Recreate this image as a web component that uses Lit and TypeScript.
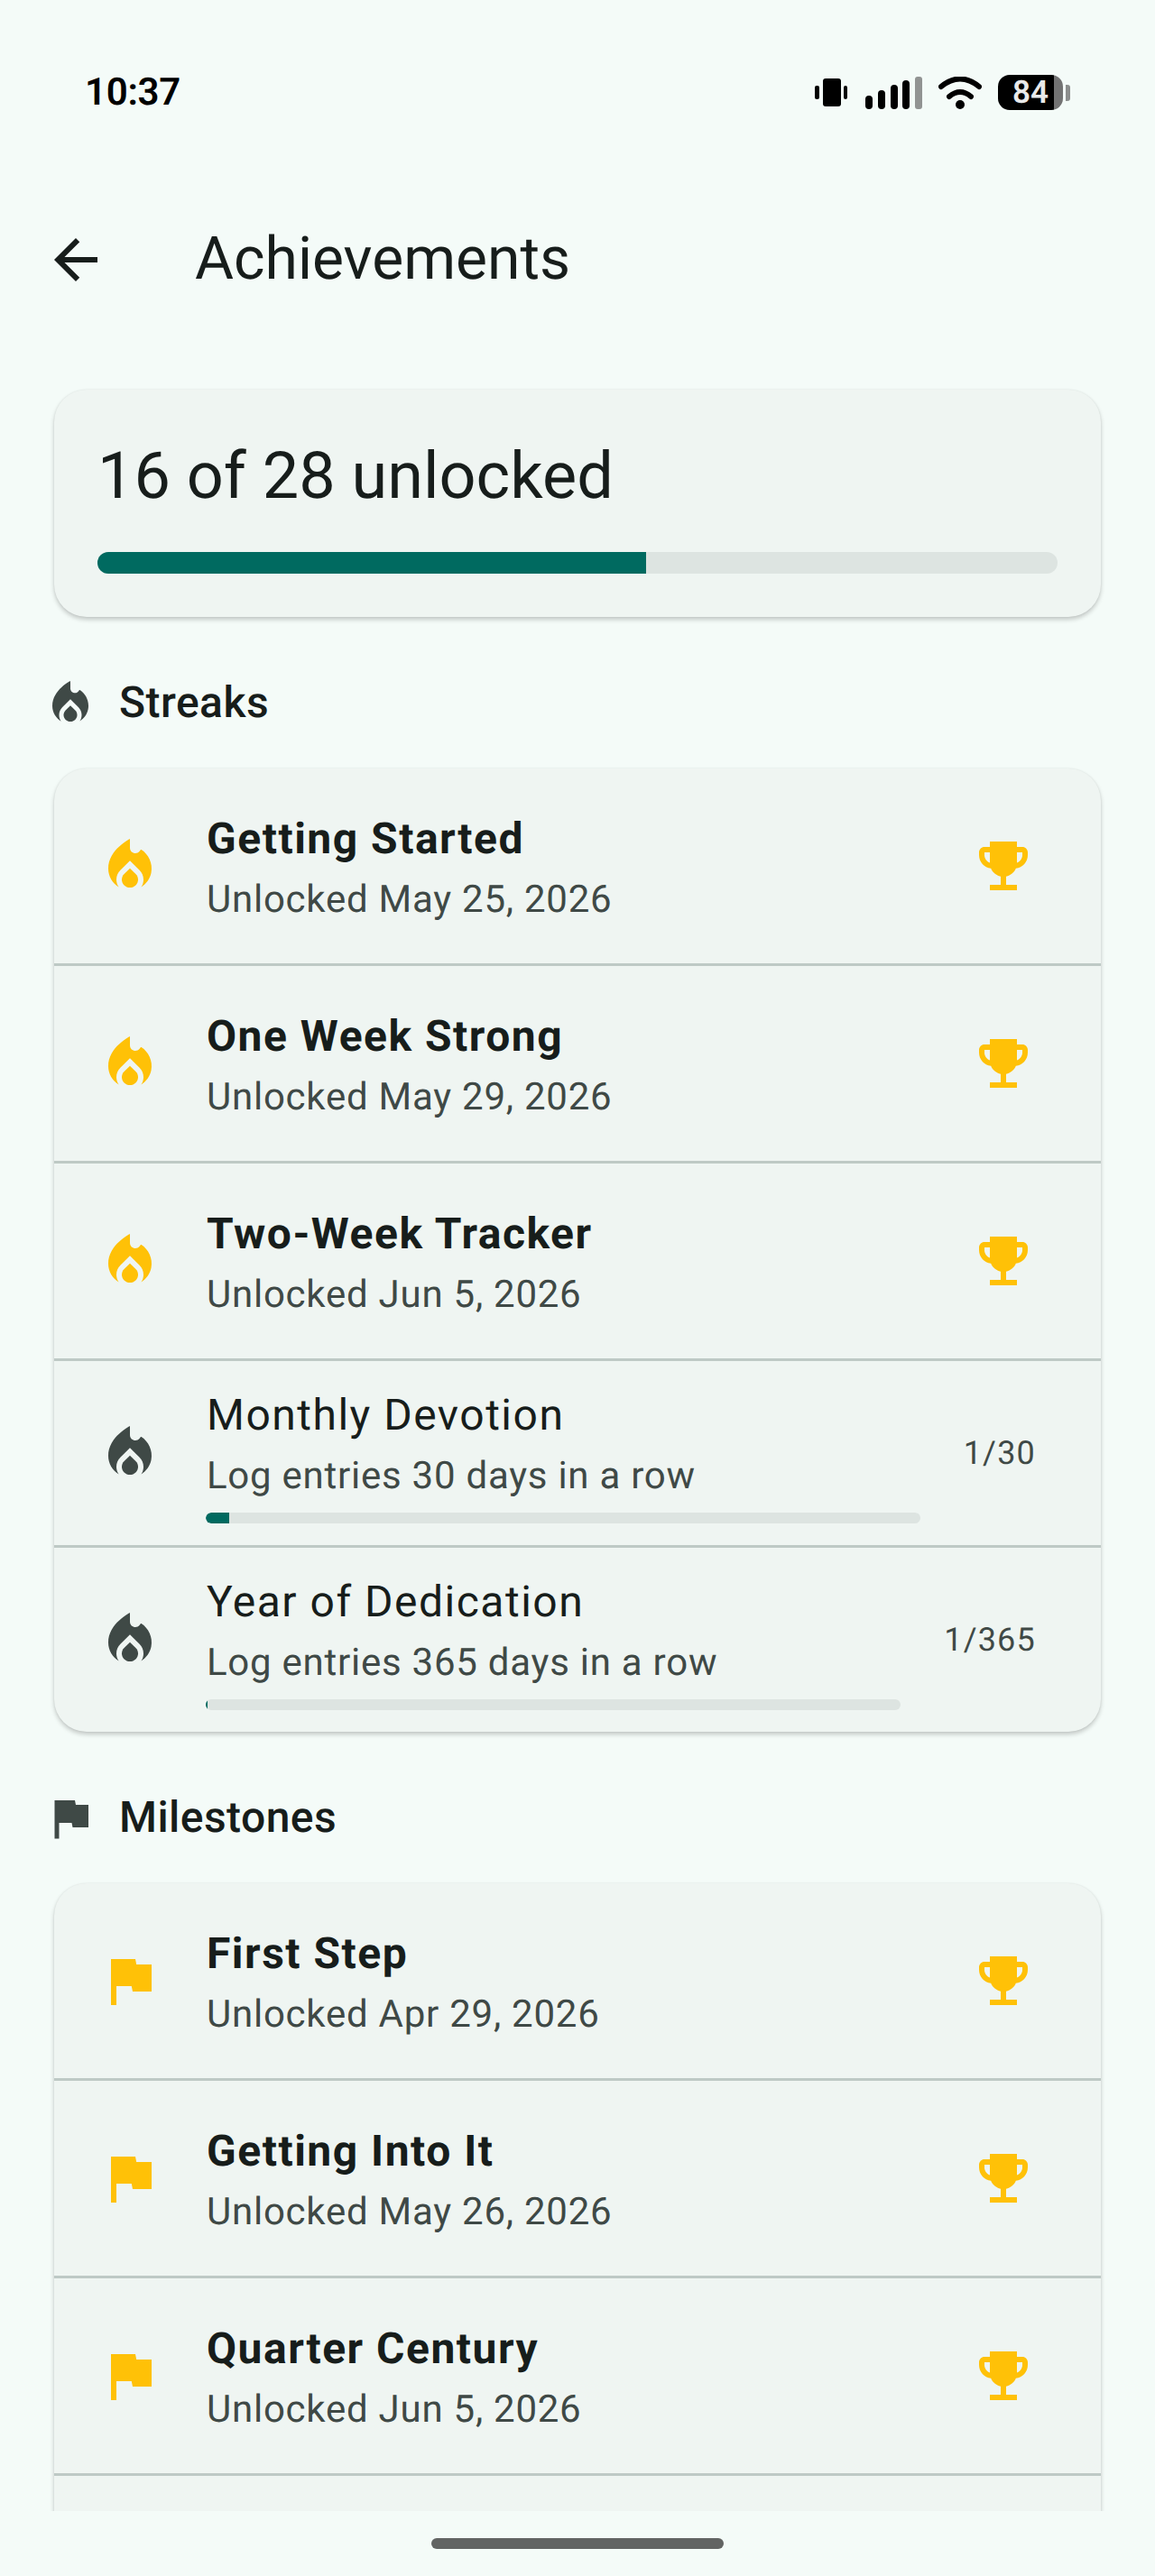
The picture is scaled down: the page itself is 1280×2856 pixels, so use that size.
import { LitElement, css, html, svg, nothing } from "lit";
import { customElement } from "lit/decorators.js";

const FLAME = svg`<path d="M12 12.9l-2.13 2.09C9.31 15.55 9 16.28 9 17.06 9 18.68 10.35 20 12 20s3-1.32 3-2.94c0-.78-.31-1.52-.87-2.07L12 12.9z"/><path d="M16 6l-.44.55C14.38 8.02 12 7.19 12 5.3V2S4 6 4 13c0 2.92 1.56 5.47 3.89 6.86-.56-.79-.89-1.76-.89-2.8 0-1.32.52-2.56 1.47-3.5L12 10.1l3.53 3.47c.95.93 1.47 2.17 1.47 3.5 0 1.02-.31 1.96-.85 2.75 1.89-1.15 3.29-3.06 3.71-5.3.66-3.52-1.03-6.83-3.66-8.52z"/>`;
const FLAG = svg`<path d="M14.4 6L14 4H5v17h2v-7h5.6l.4 2h7V6z"/>`;
const TROPHY = svg`<path d="M19 5h-2V3H7v2H5c-1.1 0-2 .9-2 2v1c0 2.55 1.92 4.63 4.39 4.94.63 1.5 1.98 2.63 3.61 2.96V19H7v2h10v-2h-4v-3.1c1.63-.33 2.98-1.46 3.61-2.96C19.08 12.63 21 10.55 21 8V7c0-1.1-.9-2-2-2zM5 8V7h2v3.82C5.84 10.4 5 9.3 5 8zm14 0c0 1.3-.84 2.4-2 2.82V7h2v1z"/>`;

type Item = {
  title: string;
  sub?: string;
  done?: boolean;
  value?: number;
  goal?: number;
};

type Section = { name: string; icon: unknown; items: Item[] };

const SECTIONS: Section[] = [
  {
    name: "Streaks",
    icon: FLAME,
    items: [
      { title: "Getting Started", sub: "Unlocked May 25, 2026", done: true },
      { title: "One Week Strong", sub: "Unlocked May 29, 2026", done: true },
      { title: "Two-Week Tracker", sub: "Unlocked Jun 5, 2026", done: true },
      { title: "Monthly Devotion", sub: "Log entries 30 days in a row", value: 1, goal: 30 },
      { title: "Year of Dedication", sub: "Log entries 365 days in a row", value: 1, goal: 365 },
    ],
  },
  {
    name: "Milestones",
    icon: FLAG,
    items: [
      { title: "First Step", sub: "Unlocked Apr 29, 2026", done: true },
      { title: "Getting Into It", sub: "Unlocked May 26, 2026", done: true },
      { title: "Quarter Century", sub: "Unlocked Jun 5, 2026", done: true },
      // only the tops of this row's letters are on screen
      { title: "Halfway to a Hundred" },
    ],
  },
];

@customElement("app-root")
export class AppRoot extends LitElement {
  static styles = css`
    :host {
      display: flex;
      flex-direction: column;
      width: 1280px;
      height: 2856px;
      overflow: hidden;
      background: #f4fbf8;
      color: #171d1b;
      font-family: Roboto, "Noto Sans", sans-serif;
      text-rendering: geometricPrecision;
    }

    .status {
      flex: none;
      height: 192px;
      box-sizing: border-box;
      padding: 75px 94px 0;
    }

    .status-row {
      display: flex;
      align-items: center;
      justify-content: space-between;
      height: 55px;
    }

    .time {
      font-size: 42px;
      font-weight: 600;
      color: #000;
      letter-spacing: -0.3px;
    }

    .status-icons {
      display: flex;
      align-items: center;
    }

    .status-icons svg {
      display: block;
    }

    .signal {
      margin-left: 20px;
    }

    .wifi {
      margin-left: 18px;
    }

    .battery {
      display: flex;
      align-items: center;
      justify-content: center;
      width: 72px;
      height: 39px;
      margin-left: 18px;
      border-radius: 13px;
      background: linear-gradient(90deg, #000 86%, #737373 86%);
      color: #e9e9e9;
      font-size: 35px;
      font-weight: 600;
      line-height: 39px;
    }

    .nub {
      width: 5px;
      height: 18px;
      margin-left: 3px;
      border-radius: 0 3px 3px 0;
      background: #8c8e8d;
    }

    .appbar {
      flex: none;
      display: flex;
      align-items: center;
      height: 192px;
      padding-left: 48px;
    }

    .appbar svg {
      width: 72px;
      height: 72px;
      fill: #171d1b;
    }

    .appbar h1 {
      margin: 0 0 0 96px;
      font-size: 66px;
      font-weight: 400;
      line-height: 84px;
    }

    .scroll {
      flex: 1;
      min-height: 0;
      overflow: hidden;
      box-sizing: border-box;
      padding: 48px 48px 0;
    }

    .card {
      margin: 0 12px;
      border-radius: 36px;
      background: #eff5f2;
      box-shadow: 0 3px 5px rgba(0, 0, 0, 0.2), 0 0 2px rgba(0, 0, 0, 0.08);
      overflow: hidden;
    }

    .summary {
      padding: 48px;
    }

    .summary-text {
      font-size: 72px;
      line-height: 96px;
      font-weight: 400;
    }

    .track {
      overflow: hidden;
      background: #dde4e1;
    }

    .track .fill {
      height: 100%;
      background: #006a60;
    }

    .summary .track {
      height: 24px;
      margin-top: 36px;
      border-radius: 12px;
    }

    .section-head {
      display: flex;
      align-items: center;
      gap: 24px;
      height: 72px;
      margin-top: 60px;
      margin-bottom: 36px;
      font-size: 48px;
      font-weight: 500;
      letter-spacing: 0.45px;
    }

    .section-head span {
      margin-bottom: 3px;
    }

    .section-head svg {
      width: 60px;
      height: 60px;
      fill: #3f4946;
    }

    .row {
      display: flex;
      align-items: center;
      gap: 48px;
      padding: 0 72px 0 48px;
      box-sizing: content-box;
    }

    .row + .row {
      border-top: 3px solid #bec9c5;
    }

    .row.done {
      height: 216px;
    }

    .row.open {
      min-height: 156px;
      padding-top: 24px;
      padding-bottom: 24px;
    }

    .row.open .body {
      align-self: flex-start;
    }

    .row svg {
      flex: none;
      width: 72px;
      height: 72px;
    }

    .done svg {
      fill: #ffc107;
    }

    .open svg {
      fill: #3f4946;
    }

    .body {
      flex: 1;
      min-width: 0;
    }

    .title {
      padding-left: 1px;
      font-size: 48px;
      line-height: 72px;
      letter-spacing: 1.5px;
    }

    .done .title {
      font-weight: 700;
    }

    .sub {
      padding-left: 1px;
      font-size: 42px;
      line-height: 63px;
      margin-bottom: -3px;
      letter-spacing: 0.75px;
      color: #3f4946;
    }

    .row .track {
      height: 12px;
      margin-top: 12px;
      border-radius: 6px;
    }

    .row .fill {
      border-radius: 6px 0 0 6px;
    }

    .count {
      flex: none;
      font-size: 36px;
      letter-spacing: 1.2px;
      color: #3f4946;
    }

    .gesture {
      flex: none;
      display: flex;
      justify-content: center;
      height: 72px;
      padding-top: 30px;
      box-sizing: border-box;
      background: #f4fbf8;
    }

    .pill {
      width: 324px;
      height: 12px;
      border-radius: 6px;
      background: #626463;
    }
  `;

  renderStatus() {
    return html`
      <div class="status">
        <div class="status-row">
          <span class="time">10:37</span>
          <div class="status-icons">
            <svg width="36" height="31" viewBox="0 0 36 31" fill="#000">
              <rect x="9" y="0" width="20" height="31" rx="3"/>
              <rect x="0" y="8" width="5" height="15" rx="2"/>
              <rect x="32" y="8" width="4" height="15" rx="2"/>
            </svg>
            <svg class="signal" width="63" height="36" viewBox="0 0 63 36" fill="#000">
              <rect x="0" y="21" width="8" height="15" rx="4"/>
              <rect x="14" y="15" width="8" height="21" rx="4"/>
              <rect x="28" y="9" width="8" height="27" rx="4"/>
              <rect x="41" y="4" width="8" height="32" rx="4"/>
              <rect x="55" y="0" width="8" height="36" rx="3" fill="#919392"/>
            </svg>
            <svg class="wifi" width="48" height="36" viewBox="0 0 48 36" fill="none" stroke="#000" stroke-width="6" stroke-linecap="round">
              <path d="M3 11Q24 -6 45 11"/>
              <path d="M12 22Q24 12 36 22"/>
              <circle cx="24" cy="31" r="5" fill="#000" stroke="none"/>
            </svg>
            <div class="battery">84</div>
            <div class="nub"></div>
          </div>
        </div>
      </div>
    `;
  }

  renderRow(item: Item, icon: unknown) {
    const pct = item.goal ? ((item.value ?? 0) / item.goal) * 100 : 0;
    return html`
      <div class="row ${item.done ? "done" : "open"}">
        <svg viewBox="0 0 24 24">${icon}</svg>
        <div class="body">
          <div class="title">${item.title}</div>
          ${item.sub ? html`<div class="sub">${item.sub}</div>` : nothing}
          ${item.goal
            ? html`<div class="track"><div class="fill" style="width:${pct}%"></div></div>`
            : nothing}
        </div>
        ${item.done ? html`<svg viewBox="0 0 24 24">${TROPHY}</svg>` : nothing}
        ${item.goal ? html`<span class="count">${item.value}/${item.goal}</span>` : nothing}
      </div>
    `;
  }

  render() {
    return html`
      ${this.renderStatus()}
      <div class="appbar">
        <svg viewBox="0 0 24 24"><path d="M20 11H7.83l5.59-5.59L12 4l-8 8 8 8 1.41-1.41L7.83 13H20v-2z"/></svg>
        <h1>Achievements</h1>
      </div>
      <div class="scroll">
        <div class="card summary">
          <div class="summary-text">16 of 28 unlocked</div>
          <div class="track"><div class="fill" style="width:${(16 / 28) * 100}%"></div></div>
        </div>
        ${SECTIONS.map(
          (s) => html`
            <div class="section-head">
              <svg viewBox="0 0 24 24">${s.icon}</svg>
              <span>${s.name}</span>
            </div>
            <div class="card">${s.items.map((i) => this.renderRow(i, s.icon))}</div>
          `
        )}
      </div>
      <div class="gesture"><div class="pill"></div></div>
    `;
  }
}
